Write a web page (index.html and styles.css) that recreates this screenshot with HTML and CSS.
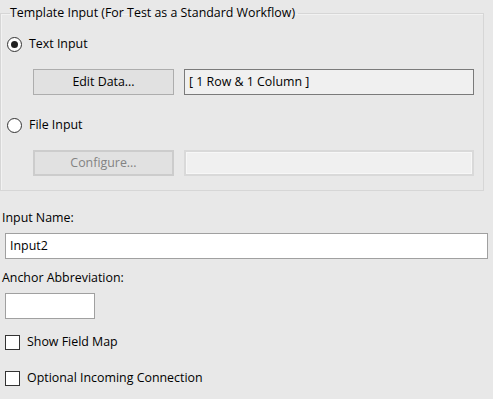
FILE: index.html
```html
<!DOCTYPE html>
<html lang="en">
<head>
    <meta charset="UTF-8">
    <title>Template Input</title>
    <link rel="stylesheet" href="styles.css">
</head>
<body>
    <fieldset class="group">
        <legend>Template Input (For Test as a Standard Workflow)</legend>

        <div class="option">
            <span class="radio checked"></span>
            <span>Text Input</span>
        </div>
        <div class="action-row">
            <div class="btn">Edit Data...</div>
            <div class="field readonly">[ 1 Row &amp; 1 Column ]</div>
        </div>

        <div class="option option-file">
            <span class="radio"></span>
            <span>File Input</span>
        </div>
        <div class="action-row">
            <div class="btn disabled">Configure...</div>
            <div class="field disabled"></div>
        </div>
    </fieldset>

    <div class="label label-name">Input Name:</div>
    <div class="field text">Input2</div>

    <div class="label label-anchor">Anchor Abbreviation:</div>
    <div class="field text short"></div>

    <div class="check check-first">
        <span class="box"></span>
        <span>Show Field Map</span>
    </div>
    <div class="check">
        <span class="box"></span>
        <span>Optional Incoming Connection</span>
    </div>
</body>
</html>
```

FILE: styles.css
```css
body { margin: 0; background: #e8e8e8; font-family: "Open Sans", "Noto Sans", sans-serif; font-size: 12.4px; line-height: 16px; color: #000; }

.group { margin: 5px 9px 0 0; padding: 15px 0 14px 6px; border: 1px solid #d6d6d6; box-shadow: inset 1px 1px 0 #f2f2f2; }
.group legend { margin-left: 3px; padding: 0 3px 0 0; }

.option { display: flex; align-items: center; gap: 7px; height: 16px; }
.option-file { margin-top: 22px; }

.radio { width: 15px; height: 15px; border: 1px solid #333; border-radius: 50%; background: #fff; box-sizing: border-box; position: relative; }
.radio.checked::after { content: ""; position: absolute; left: 3px; top: 3px; width: 7px; height: 7px; border-radius: 50%; background: #222; }

.action-row { display: flex; gap: 10px; margin: 17px 0 0 26px; }

.btn { width: 141px; height: 26px; box-sizing: border-box; border: 1px solid #adadad; background: #e1e1e1; text-align: center; line-height: 24px; }
.btn.disabled { border: 2px solid #cccccc; line-height: 22px; color: #838383; }

.field { height: 26px; box-sizing: border-box; line-height: 24px; padding: 0 4px; }
.field.readonly { width: 290px; border: 1px solid #7a7a7a; background: #f0f0f0; }
.field.disabled { width: 290px; border: 2px solid #d9d9d9; background: #f0f0f0; box-shadow: inset 0 0 0 1px #f7f7f7; }

.label { padding-left: 2px; }
.label-name { margin-top: 19px; }
.label-anchor { margin-top: 11px; }

.field.text { margin: 7px 5px 0 5px; border: 1px solid #a0a0a0; background: #fff; }
.field.short { width: 90px; }

.check { display: flex; align-items: center; gap: 7px; margin-left: 5px; height: 16px; }
.check-first { margin-top: 15px; }
.check + .check { margin-top: 20px; }
.box { width: 15px; height: 15px; box-sizing: border-box; border: 1px solid #333; background: #fff; }
```
